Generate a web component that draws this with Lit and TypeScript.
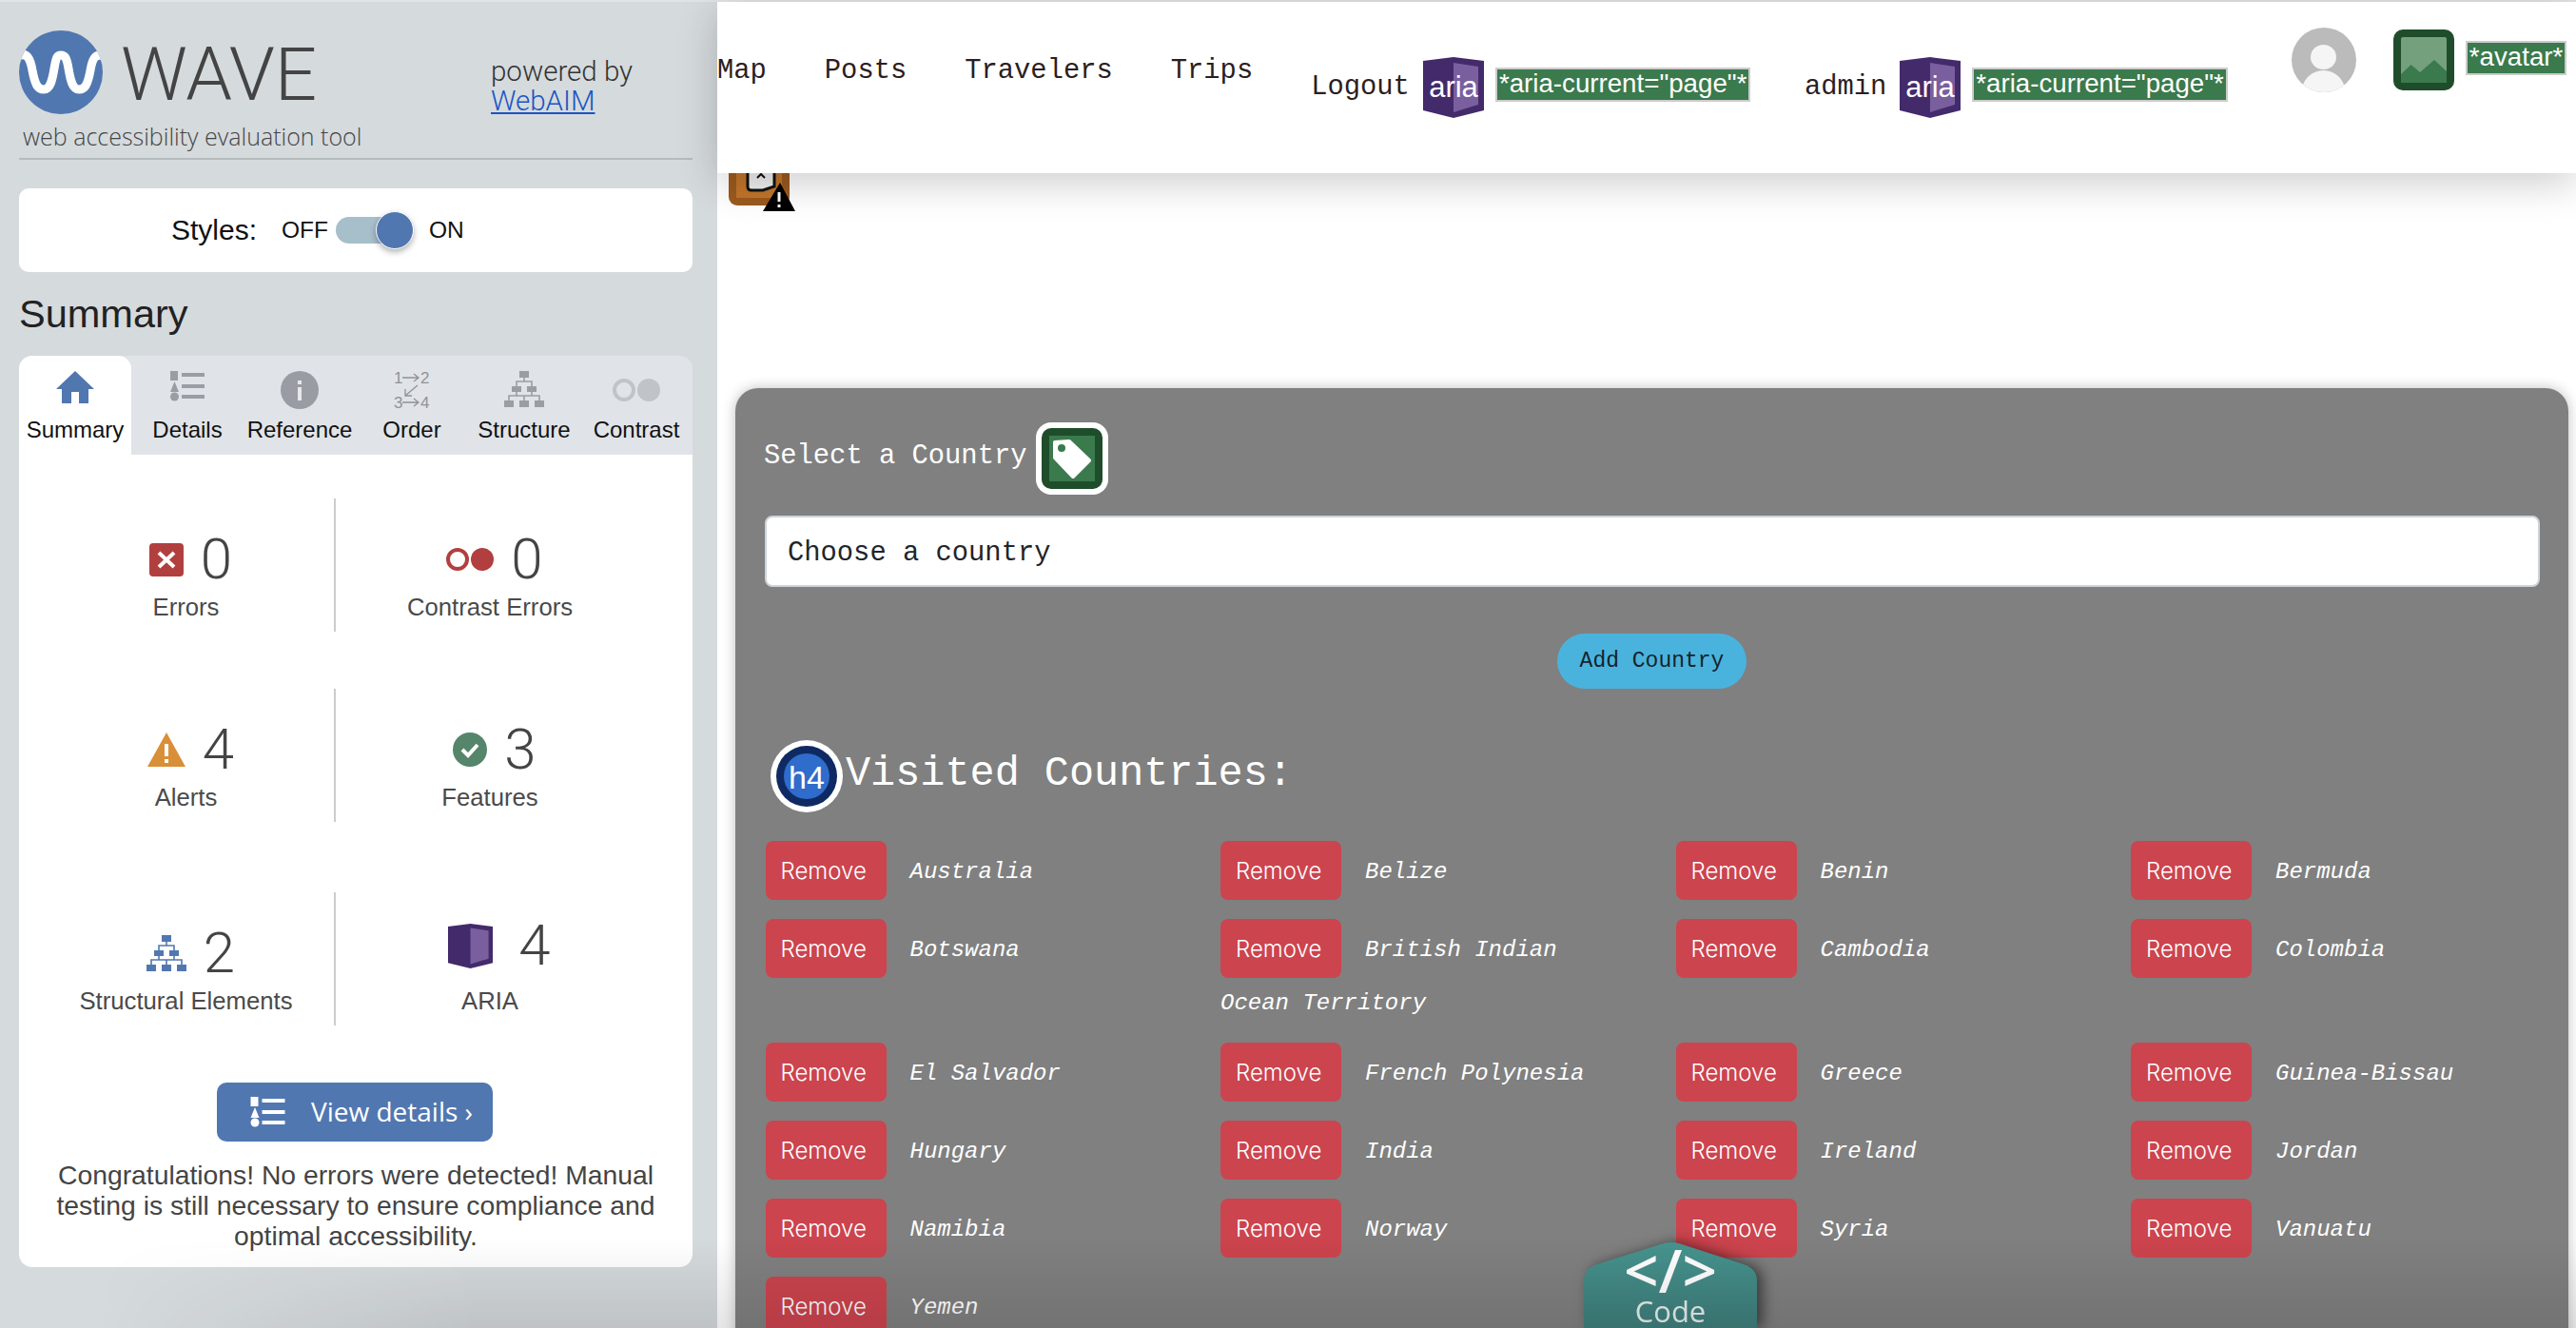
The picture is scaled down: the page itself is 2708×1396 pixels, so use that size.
import { LitElement, html, css, svg } from 'lit';
import { customElement } from 'lit/decorators.js';

const COUNTRIES = [
  'Australia', 'Belize', 'Benin', 'Bermuda',
  'Botswana', 'British Indian Ocean Territory', 'Cambodia', 'Colombia',
  'El Salvador', 'French Polynesia', 'Greece', 'Guinea-Bissau',
  'Hungary', 'India', 'Ireland', 'Jordan',
  'Namibia', 'Norway', 'Syria', 'Vanuatu',
  'Yemen',
];

const listIcon = (color: string, w: number, h: number) => html`
  <svg width=${w} height=${h} viewBox="0 0 36 32" fill=${color}>
    <rect x="0" y="0" width="8" height="10" />
    <rect x="12" y="2" width="24" height="4" />
    <path d="M4.5 11 L9 22 H0 Z" />
    <rect x="12" y="14" width="24" height="4" />
    <circle cx="4.5" cy="27" r="4.5" />
    <rect x="12" y="25" width="24" height="4" />
  </svg>
`;

const structureIcon = (color: string, w: number, h: number) => html`
  <svg width=${w} height=${h} viewBox="0 0 42 38" fill=${color}>
    <rect x="16" y="0" width="10" height="7" />
    <rect x="8" y="16" width="10" height="6" />
    <rect x="24" y="16" width="10" height="6" />
    <rect x="0" y="31" width="10" height="7" />
    <rect x="16" y="31" width="10" height="7" />
    <rect x="32" y="31" width="10" height="7" />
    <path d="M21 7 V11 M13 16 V11 H29 V16 M13 22 V26 M29 22 V26 M5 31 V26 H37 V31 M21 26 V31" fill="none" stroke=${color} stroke-width="1.6" />
  </svg>
`;

const shieldShape = svg`
  <path d="M0 4 L32 0 L64 4 V56 L32 64 L0 56 Z" fill="#432a6b" />
  <path d="M32 6 L58 10 V50 L32 58 Z" fill="#7a5f9f" />
`;

const ariaBadge = html`
  <svg class="badge" width="64" height="64" viewBox="0 0 64 64">
    ${shieldShape}
    <text x="32" y="42" text-anchor="middle" class="aria-word">aria</text>
  </svg>
`;

@customElement('app-root')
export class AppRoot extends LitElement {
  static styles = css`
    :host {
      display: block;
      position: relative;
      width: 2708px;
      height: 1396px;
      overflow: hidden;
      background: #fff;
      font-family: 'Liberation Sans', Arial, sans-serif;
    }
    .page {
      display: flex;
      height: 1394px;
      border-top: 2px solid #e2e4e4;
    }

    /* sidebar */
    .sidebar {
      width: 754px;
      flex: none;
      box-sizing: border-box;
      padding: 0 26px 0 20px;
      background: #d5dadd;
    }
    .brand {
      box-sizing: border-box;
      height: 166px;
      padding-top: 30px;
      border-bottom: 2px solid #b5babd;
    }
    .brand-top {
      display: flex;
      height: 90px;
    }
    .logo {
      flex: none;
    }
    .wordmark {
      width: 389px;
      margin-left: 19px;
      padding-top: 3px;
      font: 300 78px/88px Roboto, sans-serif;
      color: #444;
    }
    .powered {
      margin-top: 28px;
      font: 300 29.5px/31px Roboto, sans-serif;
      color: #333;
    }
    .powered a {
      color: #1a55c4;
      text-decoration: underline;
    }
    .tagline {
      margin: 3px 0 0 4px;
      font: 300 25px/36px 'Open Sans', sans-serif;
      color: #444;
    }
    .styles-box {
      display: flex;
      align-items: center;
      height: 88px;
      margin-top: 30px;
      padding-left: 160px;
      background: #fff;
      border-radius: 10px;
      font-size: 24.5px;
      color: #111;
    }
    .styles-label {
      font-size: 30px;
      margin-right: 26px;
    }
    .track {
      position: relative;
      width: 79px;
      height: 28px;
      margin: 0 19px 0 8px;
      border-radius: 14px;
      background: #a6bfca;
    }
    .thumb {
      position: absolute;
      top: -6px;
      right: -3px;
      box-sizing: border-box;
      width: 40px;
      height: 40px;
      border-radius: 50%;
      border: 1px solid #fff;
      background: #5177b0;
      box-shadow: 0 3px 6px rgba(0, 0, 0, 0.3);
    }
    h2 {
      margin: 20px 0;
      font-size: 41.5px;
      font-weight: 400;
      line-height: 48px;
      color: #222;
    }
    .tabs {
      display: flex;
      height: 104px;
      background: #e0e4e8;
      border-radius: 14px 14px 0 0;
    }
    .tab {
      width: 118px;
      display: flex;
      flex-direction: column;
      align-items: center;
      font-size: 24px;
      color: #111;
    }
    .tab.active {
      background: #fff;
      border-radius: 14px 14px 0 0;
    }
    .tab-icon {
      display: flex;
      align-items: flex-start;
      justify-content: center;
      height: 40px;
      margin-top: 16px;
    }
    .tab-icon.low {
      align-items: center;
    }
    .order-icon {
      margin-top: -4px;
    }
    .tab-label {
      margin-top: 4px;
      line-height: 36px;
    }
    .tab-icon text {
      font: 17px 'Liberation Sans', sans-serif;
      fill: #8f9398;
    }
    .panel {
      height: 854px;
      box-sizing: border-box;
      padding-top: 46px;
      background: #fff;
      border-radius: 0 0 14px 14px;
    }
    .stats {
      display: grid;
      grid-template-columns: 333px 324px;
      grid-template-rows: 140px 140px 140px;
      row-gap: 60px;
    }
    .stats .third {
      margin-top: 14px;
    }
    .stat {
      box-sizing: border-box;
      height: 140px;
      text-align: center;
    }
    .stat.left {
      padding-left: 20px;
      border-right: 2px solid #ccc;
    }
    .num-row {
      display: flex;
      align-items: center;
      justify-content: center;
      gap: 18px;
      height: 80px;
      margin-top: 24px;
      padding-left: 10px;
      font: 300 60px/80px Roboto, sans-serif;
      color: #444;
    }
    .num-row.shift {
      gap: 27px;
      height: 64px;
      padding-bottom: 16px;
      padding-left: 20px;
    }
    .stat-label {
      font-size: 25.7px;
      line-height: 36px;
      color: #4a4a4a;
      margin-top: -8px;
    }
    .details-btn {
      display: flex;
      align-items: center;
      box-sizing: border-box;
      width: 290px;
      height: 62px;
      margin: 74px 0 0 208px;
      padding-left: 35px;
      border-radius: 10px;
      background: #5177b0;
      color: #fff;
      font: 28px 'Open Sans', sans-serif;
    }
    .details-btn svg {
      margin-right: 27px;
    }
    .details-btn span {
      margin-top: -3px;
    }
    .congrats {
      margin: 19px 30px 0;
      font-size: 28.3px;
      line-height: 32px;
      text-align: center;
      color: #444;
    }

    /* page */
    .main {
      position: relative;
      flex: 1;
      min-width: 0;
    }
    nav {
      position: relative;
      z-index: 2;
      display: flex;
      align-items: flex-start;
      height: 180px;
      background: #fff;
      box-shadow: 0 10px 40px rgba(0, 0, 0, 0.2);
      font: 28.8px 'Liberation Mono', monospace;
      color: #2b1e1e;
    }
    .links {
      display: flex;
      gap: 61px;
      margin-top: 53px;
      line-height: 40px;
    }
    .nav-group {
      display: flex;
      align-items: center;
      height: 64px;
      margin-top: 58px;
      line-height: 40px;
    }
    .logout {
      margin-left: 61px;
    }
    .admin {
      margin-left: 56.5px;
    }
    .badge {
      flex: none;
      margin: 0 12px 0 14px;
    }
    .aria-word {
      font: 31px 'Liberation Sans', sans-serif;
      fill: #fff;
    }
    .tag-label {
      box-sizing: border-box;
      height: 36px;
      padding: 0 2px;
      border: 2px solid #ccc;
      background: #3a7a4d;
      color: #fff;
      font: 27.7px/30px 'Liberation Sans', sans-serif;
      white-space: nowrap;
      margin-top: -6px;
    }
    .avatar {
      flex: none;
      margin: 27px 0 0 67px;
    }
    .image-icon {
      flex: none;
      margin: 29px 0 0 39px;
    }
    .avatar-tag {
      margin: 41px 0 0 12px;
    }
    .warn {
      position: absolute;
      left: 12px;
      top: 150px;
      z-index: 1;
    }
    .content {
      padding: 226px 8px 0 19px;
    }
    .box {
      box-sizing: border-box;
      height: 1100px;
      padding: 36px 30px 0;
      background: #808080;
      border-radius: 24px;
      box-shadow: 0 0 14px rgba(0, 0, 0, 0.25);
      font-family: 'Liberation Mono', monospace;
      color: #fff;
    }
    .select-label {
      display: flex;
      align-items: center;
      gap: 9px;
      height: 76px;
      font-size: 28.8px;
    }
    .select-label span {
      margin-top: -5px;
    }
    .fake-input {
      box-sizing: border-box;
      height: 75px;
      margin: 22px 0 0 1px;
      padding-left: 22px;
      border: 2px solid #ced4da;
      border-radius: 8px;
      background: #fff;
      color: #212529;
      font-size: 28.8px;
      line-height: 75px;
    }
    .add-btn {
      display: block;
      width: 199px;
      height: 58px;
      margin: 49px auto 0;
      border: none;
      border-radius: 29px;
      background: #4ab3dd;
      color: #14232b;
      font: 23px 'Liberation Mono', monospace;
    }
    h4 {
      display: flex;
      align-items: center;
      gap: 3px;
      height: 76px;
      margin: 54px 0 0 7px;
      font-size: 43.5px;
      font-weight: 400;
    }
    h4 span {
      margin-top: -6px;
    }
    .h4-word {
      font: 34px 'Liberation Sans', sans-serif;
      fill: #fff;
    }
    .countries {
      display: grid;
      grid-template-columns: repeat(4, 478.5px);
      margin: 30px 0 0 1.5px;
    }
    .country {
      box-sizing: border-box;
      padding: 0 48px 17px 0;
      font-size: 24px;
      font-style: italic;
      line-height: 48px;
    }
    .remove {
      display: inline-block;
      vertical-align: middle;
      box-sizing: border-box;
      width: 127px;
      height: 62px;
      margin: 0 25px 3px 0;
      padding: 0 0 0 16px;
      border: none;
      border-radius: 8px;
      background: #cc444e;
      color: #fff;
      text-align: left;
      font: 300 24px Inter, sans-serif;
    }

    /* overlays */
    .code-wrap {
      position: absolute;
      left: 1665px;
      top: 1306px;
      z-index: 3;
      filter: drop-shadow(6px 0 7px rgba(0, 0, 0, 0.5));
    }
    .code {
      width: 182px;
      height: 90px;
      display: flex;
      flex-direction: column;
      align-items: center;
      clip-path: path('M0 40 Q0 28 14 23 L84 1 Q92 -1 100 1 L168 23 Q182 28 182 40 V90 H0 Z');
      background: linear-gradient(#47948f, #3f7f7c);
      color: #fff;
      font-family: 'Open Sans', sans-serif;
    }
    .code-mark {
      font-size: 64px;
      font-weight: 600;
      line-height: 50px;
      margin-top: 4px;
    }
    .code-word {
      margin-top: 3px;
      font-size: 31px;
      line-height: 30px;
      color: #e6efee;
    }
    .fade {
      position: absolute;
      left: 0;
      right: 0;
      bottom: 0;
      height: 96px;
      z-index: 4;
      pointer-events: none;
      background: linear-gradient(rgba(0, 0, 0, 0), rgba(0, 0, 0, 0.1));
      -webkit-mask-image: linear-gradient(to right, transparent 100px, #000 500px);
      mask-image: linear-gradient(to right, transparent 100px, #000 500px);
    }
  `;

  private renderSidebar() {
    return html`
      <aside class="sidebar">
        <div class="brand">
          <div class="brand-top">
            <svg class="logo" width="88" height="88" viewBox="0 0 88 88">
              <defs><clipPath id="lc"><circle cx="44" cy="44" r="44" /></clipPath></defs>
              <circle cx="44" cy="44" r="44" fill="#5177b0" />
              <path clip-path="url(#lc)" fill="none" stroke="#fff" stroke-width="9"
                d="M0 27 C8 22 12 30 14 42 C17 58 20 62 26 62 C33 62 35 52 37 40 C39 28 40 26 44 26 C48 26 50 28 52 40 C54 52 56 62 63 62 C69 62 72 58 75 42 C77 30 80 24 88 27" />
            </svg>
            <div class="wordmark">WAVE</div>
            <div class="powered">powered by<br /><a href="#">WebAIM</a></div>
          </div>
          <div class="tagline">web accessibility evaluation tool</div>
        </div>

        <div class="styles-box">
          <span class="styles-label">Styles:</span>
          <span>OFF</span>
          <div class="track"><div class="thumb"></div></div>
          <span>ON</span>
        </div>

        <h2>Summary</h2>

        <div class="tabs">
          <div class="tab active">
            <div class="tab-icon">
              <svg width="40" height="34" viewBox="0 0 40 34" fill="#5177b0">
                <path d="M20 0 L40 19 H34 V34 H24 V22 H16 V34 H6 V19 H0 Z" />
              </svg>
            </div>
            <div class="tab-label">Summary</div>
          </div>
          <div class="tab">
            <div class="tab-icon">${listIcon('#9a9ea4', 36, 32)}</div>
            <div class="tab-label">Details</div>
          </div>
          <div class="tab">
            <div class="tab-icon">
              <svg width="40" height="40" viewBox="0 0 40 40">
                <circle cx="20" cy="20" r="20" fill="#999da3" />
                <rect x="18" y="10" width="4" height="4" fill="#e6e8ea" />
                <rect x="18" y="17" width="4" height="14" fill="#e6e8ea" />
              </svg>
            </div>
            <div class="tab-label">Reference</div>
          </div>
          <div class="tab">
            <div class="tab-icon">
              <svg class="order-icon" width="48" height="48" viewBox="0 -4 48 48">
                <text x="5" y="13">1</text>
                <path d="M14 7 H30 M26 3 L31 7 L26 11" fill="none" stroke="#8f9398" stroke-width="1.3" />
                <text x="33" y="13">2</text>
                <path d="M30 15 L17 26 M17 19 V26 H24" fill="none" stroke="#8f9398" stroke-width="1.3" />
                <text x="5" y="39">3</text>
                <path d="M14 33 H30 M26 29 L31 33 L26 37" fill="none" stroke="#8f9398" stroke-width="1.3" />
                <text x="33" y="39">4</text>
              </svg>
            </div>
            <div class="tab-label">Order</div>
          </div>
          <div class="tab">
            <div class="tab-icon">${structureIcon('#9a9ea4', 42, 38)}</div>
            <div class="tab-label">Structure</div>
          </div>
          <div class="tab">
            <div class="tab-icon low">
              <svg width="50" height="24" viewBox="0 0 50 24">
                <circle cx="12" cy="12" r="10" fill="none" stroke="#c0c3c7" stroke-width="4" />
                <circle cx="38" cy="12" r="12" fill="#c0c3c7" />
              </svg>
            </div>
            <div class="tab-label">Contrast</div>
          </div>
        </div>

        <div class="panel">
          <div class="stats">
            <div class="stat left">
              <div class="num-row">
                <svg width="36" height="35" viewBox="0 0 36 35">
                  <rect width="36" height="35" rx="4" fill="#b23f3f" />
                  <path d="M10 10 L26 25 M26 10 L10 25" stroke="#fff" stroke-width="4" />
                </svg>
                <span>0</span>
              </div>
              <div class="stat-label">Errors</div>
            </div>
            <div class="stat">
              <div class="num-row">
                <svg width="50" height="26" viewBox="0 0 50 26">
                  <circle cx="12" cy="13" r="10" fill="none" stroke="#b23f3f" stroke-width="4" />
                  <circle cx="38" cy="13" r="12" fill="#b23f3f" />
                </svg>
                <span>0</span>
              </div>
              <div class="stat-label">Contrast Errors</div>
            </div>
            <div class="stat left">
              <div class="num-row">
                <svg width="40" height="36" viewBox="0 0 40 36">
                  <path d="M20 0 L40 36 H0 Z" fill="#d98f37" />
                  <rect x="18" y="12" width="4" height="13" fill="#fff" />
                  <rect x="18" y="28" width="4" height="4" fill="#fff" />
                </svg>
                <span>4</span>
              </div>
              <div class="stat-label">Alerts</div>
            </div>
            <div class="stat">
              <div class="num-row">
                <svg width="36" height="36" viewBox="0 0 36 36">
                  <circle cx="18" cy="18" r="18" fill="#55856a" />
                  <path d="M10 18 L16 24 L26 13" fill="none" stroke="#fff" stroke-width="4" />
                </svg>
                <span>3</span>
              </div>
              <div class="stat-label">Features</div>
            </div>
            <div class="stat left third">
              <div class="num-row">${structureIcon('#5177b0', 42, 38)}<span>2</span></div>
              <div class="stat-label">Structural Elements</div>
            </div>
            <div class="stat third">
              <div class="num-row shift">
                <svg width="47" height="47" viewBox="0 0 64 64">${shieldShape}</svg>
                <span>4</span>
              </div>
              <div class="stat-label">ARIA</div>
            </div>
          </div>

          <div class="details-btn">${listIcon('#fff', 37, 32)}<span>View details ›</span></div>
          <p class="congrats">
            Congratulations! No errors were detected! Manual testing is still necessary to ensure
            compliance and optimal accessibility.
          </p>
        </div>
      </aside>
    `;
  }

  private renderNav() {
    return html`
      <nav>
        <div class="links">
          <span>Map</span><span>Posts</span><span>Travelers</span><span>Trips</span>
        </div>
        <div class="nav-group logout">
          <span>Logout</span>${ariaBadge}<span class="tag-label">*aria-current="page"*</span>
        </div>
        <div class="nav-group admin">
          <span>admin</span>${ariaBadge}<span class="tag-label">*aria-current="page"*</span>
        </div>
        <svg class="avatar" width="68" height="68" viewBox="0 0 68 68">
          <defs><clipPath id="ac"><circle cx="34" cy="34" r="34" /></clipPath></defs>
          <circle cx="34" cy="34" r="34" fill="#bbb" />
          <ellipse cx="33.5" cy="31" rx="13.5" ry="13" fill="#f5f5f5" />
          <ellipse clip-path="url(#ac)" cx="33.5" cy="68" rx="23" ry="23" fill="#f5f5f5" />
        </svg>
        <svg class="image-icon" width="64" height="64" viewBox="0 0 64 64">
          <rect width="64" height="64" rx="10" fill="#1f4d2b" />
          <rect x="8" y="8" width="48" height="48" rx="2" fill="#74a07e" />
          <path d="M8 47 L18.5 37 L28 45 L43 32 L56 44 V54 Q56 56 54 56 H10 Q8 56 8 54 Z" fill="#3a7a4d" />
        </svg>
        <span class="tag-label avatar-tag">*avatar*</span>
      </nav>
    `;
  }

  private renderWarning() {
    return html`
      <svg class="warn" width="72" height="72" viewBox="0 0 72 72">
        <rect x="0" y="0" width="64" height="64" rx="9" fill="#9c5a1e" />
        <rect x="8" y="8" width="48" height="48" fill="#c2752a" />
        <path d="M20 10 H48 V44 L36 48 H24 Q20 48 20 44 Z" fill="#f0f0f0" stroke="#111" stroke-width="3" />
        <path d="M30 35 L34 31 L38 35" fill="none" stroke="#111" stroke-width="2" />
        <path d="M54 40 L70 70 H36 Z" fill="#000" />
        <rect x="51.5" y="50" width="3" height="10" fill="#fff" />
        <rect x="51.5" y="63" width="3" height="3" fill="#fff" />
      </svg>
    `;
  }

  private renderContent() {
    return html`
      <div class="content">
        <section class="box">
          <div class="select-label">
            <span>Select a Country</span>
            <svg width="76" height="76" viewBox="0 0 76 76">
              <rect width="76" height="76" rx="16" fill="#fff" />
              <rect x="6" y="6" width="64" height="64" rx="10" fill="#1f4d2b" />
              <rect x="14" y="14" width="48" height="48" fill="#3a7a4d" />
              <path d="M20 21 L35 20 L56 40 L39 57 L20 37 Z" fill="#fff" stroke="#fff" stroke-width="4" stroke-linejoin="round" />
              <circle cx="27" cy="27" r="4" fill="#3a7a4d" />
            </svg>
          </div>
          <div class="fake-input">Choose a country</div>
          <button class="add-btn">Add Country</button>
          <h4>
            <svg width="76" height="76" viewBox="0 0 76 76">
              <circle cx="38" cy="38" r="38" fill="#fff" />
              <circle cx="38" cy="38" r="32" fill="#0f2a63" />
              <circle cx="38" cy="38" r="24" fill="#2f6ccb" />
              <text x="38" y="51" text-anchor="middle" class="h4-word">h4</text>
            </svg>
            <span>Visited Countries:</span>
          </h4>
          <div class="countries">
            ${COUNTRIES.map(
              (name) => html`<div class="country"><button class="remove">Remove</button>${name}</div>`
            )}
          </div>
        </section>
      </div>
    `;
  }

  render() {
    return html`
      <div class="page">
        ${this.renderSidebar()}
        <main class="main">
          ${this.renderNav()} ${this.renderWarning()} ${this.renderContent()}
        </main>
      </div>
      <div class="code-wrap">
        <div class="code">
          <span class="code-mark">&lt;/&gt;</span>
          <span class="code-word">Code</span>
        </div>
      </div>
      <div class="fade"></div>
    `;
  }
}
